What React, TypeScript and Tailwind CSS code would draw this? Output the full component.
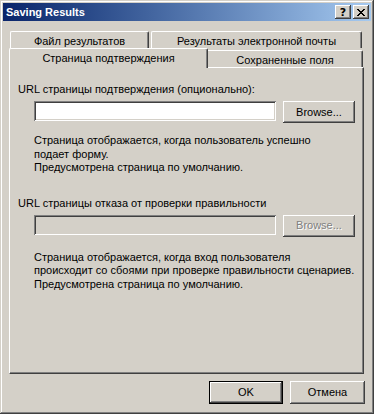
import React from "react";

const raised =
  "shadow-[inset_-1px_-1px_#404040,inset_1px_1px_#ffffff,inset_-2px_-2px_#808080,inset_2px_2px_#d4d0c8]";
const sunken =
  "shadow-[inset_1px_1px_#808080,inset_-1px_-1px_#ffffff,inset_2px_2px_#404040,inset_-2px_-2px_#d4d0c8]";

function TitleBtn({ children }: { children: React.ReactNode }) {
  return (
    <div className={`w-[16px] h-[14px] bg-[#d4d0c8] flex items-center justify-center ${raised}`}>
      {children}
    </div>
  );
}

function Browse({ disabled }: { disabled?: boolean }) {
  return (
    <div
      className={`w-[72px] h-[22px] bg-[#d4d0c8] flex items-center justify-center ${raised} ${
        disabled ? "text-[#808080] [text-shadow:1px_1px_0_#ffffff]" : "text-black"
      }`}
    >
      Browse...
    </div>
  );
}

export default function App() {
  return (
    <div className="w-[374px] h-[414px] bg-[#d4d0c8] p-[3px] flex flex-col text-[11px] leading-[13px] text-black [font-family:'Liberation_Sans',Arial,sans-serif] shadow-[inset_-1px_-1px_#404040,inset_1px_1px_#d4d0c8,inset_-2px_-2px_#808080,inset_2px_2px_#ffffff]">
      {/* Title bar */}
      <div className="h-[18px] flex items-center bg-linear-to-r from-[#0a246a] to-[#a6caf0] pl-[2px] pr-[2px]">
        <span className="font-bold text-white text-[11px] ml-[1px]">Saving Results</span>
        <div className="ml-auto flex gap-[2px]">
          <TitleBtn>
            <span className="font-bold text-[11px] leading-none text-black [font-family:'DejaVu_Sans',sans-serif]">?</span>
          </TitleBtn>
          <TitleBtn>
            <svg width="8" height="7" viewBox="0 0 8 7">
              <path d="M0 0h2v1h-2zM6 0h2v1h-2zM1 1h2v1h-2zM5 1h2v1h-2zM2 2h4v1h-4zM3 3h2v1h-2zM2 4h4v1h-4zM1 5h2v1h-2zM5 5h2v1h-2zM0 6h2v1h-2zM6 6h2v1h-2z" fill="#000" />
            </svg>
          </TitleBtn>
        </div>
      </div>

      {/* Body */}
      <div className="flex-1 px-[6px] pt-[10px] flex flex-col">
        {/* Back tab row */}
        <div className="flex h-[17px] ml-[1px] gap-[2px]">
          <div className="w-[139px] bg-[#d4d0c8] border-t border-l border-white border-r border-r-[#404040] rounded-t-[2px] shadow-[inset_-1px_0_#808080] flex justify-center pt-[3px]">
            Файл результатов
          </div>
          <div className="w-[211px] bg-[#d4d0c8] border-t border-l border-white border-r border-r-[#404040] rounded-t-[2px] shadow-[inset_-1px_0_#808080] flex justify-center pt-[3px]">
            Результаты электронной почты
          </div>
        </div>
        {/* Front tab row */}
        <div className="flex h-[20px] -mb-[1px] relative z-10">
          <div className="w-[199px] h-[20px] bg-[#d4d0c8] border-t border-l border-white border-r border-r-[#404040] rounded-t-[2px] shadow-[inset_-1px_0_#808080] flex justify-center pt-[3px]">
            Страница подтверждения
          </div>
          <div className="w-[155px] h-[17px] mt-[2px] bg-[#d4d0c8] border-t border-white border-r border-r-[#404040] rounded-tr-[2px] shadow-[inset_-1px_0_#808080] flex justify-center pt-[3px]">
            Сохраненные поля
          </div>
        </div>
        {/* Panel */}
        <div className="w-[355px] h-[307px] border border-t-white border-l-white border-b-[#404040] border-r-[#404040] shadow-[inset_-1px_-1px_#808080] pl-[8px] pt-[15px] flex flex-col">
          <div>URL страницы подтверждения (опционально):</div>
          <div className="flex ml-[16px] mt-[5px] gap-[7px] items-start">
            <div className={`w-[242px] h-[20px] bg-white ${sunken}`} />
            <Browse />
          </div>
          <div className="ml-[16px] mt-[11px] leading-[13.5px]">
            <div>Страница отображается, когда пользователь успешно</div>
            <div>подает форму.</div>
            <div>Предусмотрена страница по умолчанию.</div>
          </div>

          <div className="mt-[22px]">URL страницы отказа от проверки правильности</div>
          <div className="flex ml-[16px] mt-[5px] gap-[7px] items-start">
            <div className={`w-[242px] h-[20px] bg-[#d4d0c8] ${sunken}`} />
            <Browse disabled />
          </div>
          <div className="ml-[16px] mt-[14px] leading-[13.5px]">
            <div>Страница отображается, когда вход пользователя</div>
            <div>происходит со сбоями при проверке правильности сценариев.</div>
            <div>Предусмотрена страница по умолчанию.</div>
          </div>
        </div>
        {/* Bottom buttons */}
        <div className="flex justify-end gap-[7px] mt-[7px]">
          <div className="w-[74px] h-[23px] border border-black">
            <div className={`w-full h-full bg-[#d4d0c8] flex items-center justify-center ${raised}`}>OK</div>
          </div>
          <div className={`w-[75px] h-[23px] bg-[#d4d0c8] flex items-center justify-center ${raised}`}>Отмена</div>
        </div>
      </div>
    </div>
  );
}
